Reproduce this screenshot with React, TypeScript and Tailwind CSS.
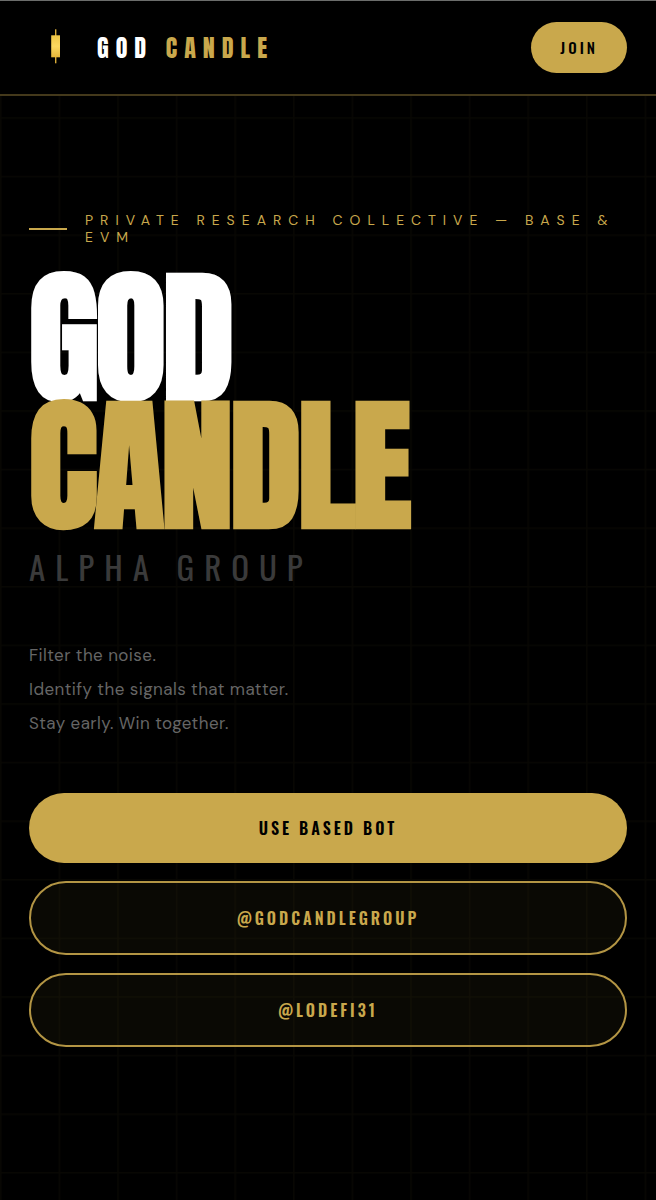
import React from 'react';

interface LinkItem {
  label: string;
  href: string;
  primary?: boolean;
}

const links: LinkItem[] = [
  { label: 'USE BASED BOT', href: '#bot', primary: true },
  { label: '@GODCANDLEGROUP', href: '#group' },
  { label: '@LODEFI31', href: '#lodefi31' },
];

const CandleIcon: React.FC = () => (
  <svg className="h-[51px] w-[54px]" viewBox="0 0 54 51" aria-hidden="true">
    <defs>
      <linearGradient id="candle" x1="0" y1="0" x2="0" y2="1">
        <stop offset="0" stopColor="#efc646" />
        <stop offset="0.5" stopColor="#fbd85f" />
        <stop offset="1" stopColor="#e6b63a" />
      </linearGradient>
    </defs>
    <rect x="26" y="7.3" width="1.4" height="34" fill="#d9ac38" />
    <rect x="22.2" y="13.3" width="8.8" height="22" fill="url(#candle)" />
  </svg>
);

const GridBackground: React.FC = () => (
  <svg className="absolute inset-0 h-full w-full" aria-hidden="true">
    <defs>
      <pattern id="grid" width="58.6" height="58.6" patternUnits="userSpaceOnUse">
        <path d="M0 0.75H58.6M0.75 0V58.6" stroke="#c9a84c" strokeOpacity="0.04" strokeWidth="1.5" />
      </pattern>
    </defs>
    <rect width="100%" height="100%" fill="url(#grid)" />
  </svg>
);

const Header: React.FC = () => (
  <header className="relative flex items-center justify-between border-t border-b-2 border-t-[#6b6d6b] border-b-[#44391b] bg-black px-[29px] py-[21px]">
    <a href="#" className="flex items-center gap-[14px]">
      <CandleIcon />
      <span className="font-['Anton','Liberation_Sans',sans-serif] text-[24px] leading-none tracking-[7px] text-white">
        GOD <span className="text-[#c9a84c]">CANDLE</span>
      </span>
    </a>
    <a
      href="#join"
      className="rounded-full bg-[#c9a84c] px-[29px] py-[14px] font-['Oswald','Liberation_Sans',sans-serif] text-[15px] leading-[23px] font-medium tracking-[3px] text-black"
    >
      JOIN
    </a>
  </header>
);

const Hero: React.FC = () => (
  <section className="relative px-[29px] pt-[116px] pb-[154px]">
    <div className="flex items-center gap-[18px]">
      <span className="h-[2px] w-[38px] shrink-0 bg-[#c9a84c]" />
      <p className="text-[14px] leading-[17px] tracking-[7px] text-[#c9a84c]">
        PRIVATE RESEARCH COLLECTIVE — BASE & EVM
      </p>
    </div>

    <h1 className="mt-7 font-['Anton','Liberation_Sans',sans-serif] text-[144px] leading-[128px] font-bold tracking-[-3px]">
      <span className="block text-white">GOD</span>
      <span className="block text-[#c9a84c]">CANDLE</span>
    </h1>
    <p className="mt-3 font-['Oswald','Liberation_Sans',sans-serif] text-[33px] leading-[50px] font-normal tracking-[10px] text-[#3a3a3a]">
      ALPHA GROUP
    </p>

    <p className="mt-[46px] text-[17px] leading-[34px] tracking-wide text-[#666666]">
      Filter the noise.
      <br />
      Identify the signals that matter.
      <br />
      Stay early. Win together.
    </p>

    <div className="mt-[53px] flex flex-col gap-[18px]">
      {links.map((link) => (
        <a
          key={link.label}
          href={link.href}
          className={`rounded-full px-8 py-[22px] text-center font-['Oswald','Liberation_Sans',sans-serif] text-[16px] leading-[26px] font-semibold tracking-[3px] ${
            link.primary
              ? 'bg-[#c9a84c] text-black'
              : 'border-2 border-[#b39544] bg-[#c9a84c]/5 text-[#c9a84c]'
          }`}
        >
          {link.label}
        </a>
      ))}
    </div>
  </section>
);

const App: React.FC = () => {
  return (
    <main className="relative min-h-screen bg-black font-['DM_Sans','Liberation_Sans',sans-serif]">
      <GridBackground />
      <Header />
      <Hero />
    </main>
  );
};

export default App;
